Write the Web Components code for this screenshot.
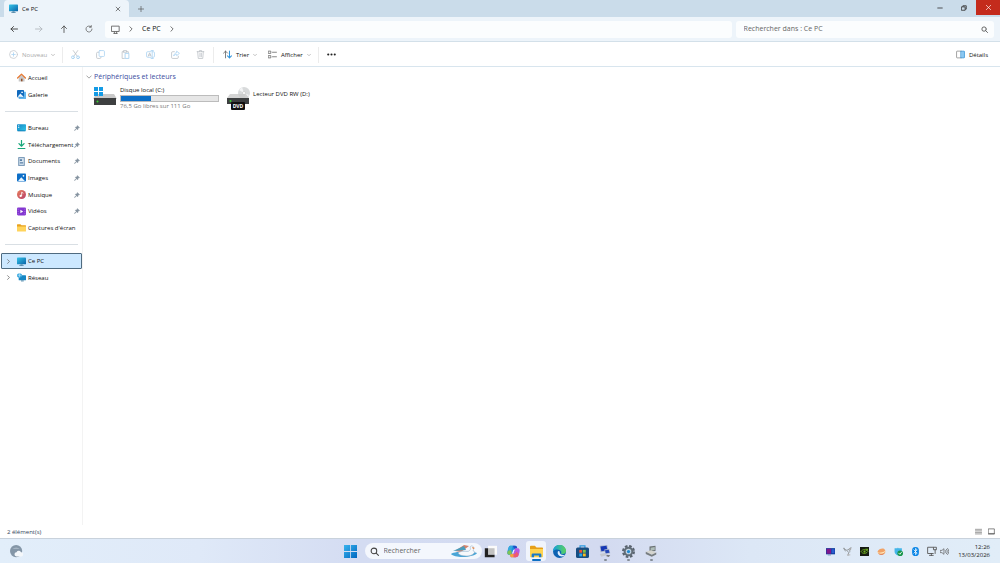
<!DOCTYPE html>
<html lang="fr">
<head>
<meta charset="utf-8">
<title>Ce PC</title>
<style>
html,body{height:100%;margin:0}
body{font:6px/8px "Open Sans","Noto Sans",sans-serif;color:#111;background:#fff;overflow:hidden}
</style>
</head>
<body>
<pc-desktop></pc-desktop>
<script>
const line = (d, c = '#555', w = 1.4) => `<path d="${d}" fill="none" stroke="${c}" stroke-width="${w}" stroke-linecap="round" stroke-linejoin="round"/>`;
const G = '#bcc1c6', B = '#a9d3f2';
const ICONS = {
  pc: `<defs><linearGradient id="a" x2="1" y2="1"><stop stop-color="#35c4e8"/><stop offset="1" stop-color="#0a63a8"/></linearGradient></defs><rect y="1" width="16" height="12" rx="1.2" fill="url(#a)"/><path d="M6 13h4v1.5h2V16H4v-1.5h2z" fill="#5c8fae"/>`,
  desktop: `<defs><linearGradient id="a" x2="1" y2="1"><stop stop-color="#1186c8"/><stop offset="1" stop-color="#35c6e4"/></linearGradient></defs><rect y="2" width="16" height="12" rx="1.5" fill="url(#a)"/><path d="M2 5h2M2 8h2" stroke="#fff" stroke-width="1.5"/><path d="M1 14h14" stroke="#0874b5" stroke-width="1.5"/>`,
  close: line('M3 3l10 10M13 3L3 13', '#444', 1.8),
  closew: line('M3 3l10 10M13 3L3 13', '#fff', 1.5),
  plus: line('M8 1v14M1 8h14', '#555', 1.8),
  min: line('M2 8h12', '#333', 2.2),
  restore: line('M5 4V2h9v9h-2M2 5h9v9H2z', '#333', 2.2),
  back: line('M15 8H2M7 3L2 8l5 5', '#444', 1.9),
  fwd: line('M1 8h13M9 3l5 5-5 5', '#b3b9be', 1.8),
  up: line('M8 15V2M3 7l5-5 5 5', '#555', 1.8),
  reload: line('M14 8a6 6 0 1 1-2-4.500M12.500 1v3.500H9', '#666', 1.6),
  monitor: line('M1.500 2h13v9.500h-13zM5 15h6M6 12v3M10 12v3', '#666', 1.6),
  right: line('M5 2l6 6-6 6', '#666', 2.4),
  down: line('M2 5l6 6 6-6', '#888', 2),
  search: line('M11 11l4 4M12 7A5 5 0 1 1 2 7a5 5 0 0 1 10 0', '#444', 1.8),
  add: line('M15 8A7 7 0 1 1 1 8a7 7 0 0 1 14 0', G, 1.2) + line('M8 5v6M5 8h6', B, 1.4),
  cut: line('M4 1l7 10M12 1L5 11', G) + line('M6 13a2.500 2.500 0 1 1-5 0 2.500 2.500 0 0 1 5 0M15 13a2.500 2.500 0 1 1-5 0 2.500 2.500 0 0 1 5 0', B, 1.7),
  copy: line('M5 4H3a2 2 0 0 0-2 2v7a2 2 0 0 0 2 2h4a2 2 0 0 0 2-2', G) + line('M7 1h6a2 2 0 0 1 2 2v7a1.500 1.500 0 0 1-1.500 1.500H7A1.500 1.500 0 0 1 5.500 10V2.500A1.500 1.500 0 0 1 7 1z', B),
  paste: line('M5 3H2v12h4M10 3h3v2M5 1h5v3H5z', G) + line('M8 6h6v9H8z', B, 1.6),
  rename: line('M9 3H3a2 2 0 0 0-2 2v6a2 2 0 0 0 2 2h6', B) + line('M4 11l2.500-6L9 11M5 9h3', G) + line('M11 1v14M9 1h4M9 15h4M12 3h1a2 2 0 0 1 2 2v6a2 2 0 0 1-2 2h-1', B),
  share: line('M6 3H3a2 2 0 0 0-2 2v8a2 2 0 0 0 2 2h8a2 2 0 0 0 2-2v-2', G) + line('M5 10c1-4 3-5 5-5V2l5 4-5 4V8c-2 0-4 0-5 2z', B),
  trash: line('M2 3h12M6 3V1h4v2M3 3l1 12h8l1-12M7 6v6M9.500 6v6', G),
  sort: line('M4.500 14V2M1 5.500L4.500 2 8 5.500', '#666', 1.5) + line('M11.500 2v12M8 10.500l3.500 3.500 3.500-3.500', '#2f94dc', 1.8),
  view: line('M1 2h4v4H1zM1 10h4v4H1zM8 4h7M8 12h7', '#666', 1.4),
  dots: `<g fill="#222"><circle cx="2.200" cy="8" r="1.900"/><circle cx="8" cy="8" r="1.900"/><circle cx="13.800" cy="8" r="1.900"/></g>`,
  details: `<rect x="9" y="2" width="6.500" height="12" fill="#8cc8f2"/>` + line('M9 2H2a1 1 0 0 0-1 1v10a1 1 0 0 0 1 1h7', '#777', 1.2) + line('M9 2h5a1 1 0 0 1 1 1v10a1 1 0 0 1-1 1H9z', '#2f8fd4', 1.2),
  home: `<path d="M3 7v8h4v-5h3v5h3.500V7L8 2.500z" fill="#c8c8c8"/><path d="M7 10h3v5H7z" fill="#8a5130"/>` + line('M1 9l7-7 7 7', '#e8772e', 2.2),
  gallery: `<rect x="3" y="3" width="13" height="13" rx="1" fill="#63b7ee"/><rect width="12.500" height="13" rx="1.500" fill="#1069bd"/><path d="M1 12l5-6 6 6.500z" fill="#e4f4ff"/><circle cx="9" cy="4" r="1.500" fill="#fff"/>`,
  download: line('M8 1v9.500M3.500 6.500L8 11l4.500-4.500', '#19a77b', 2.2) + line('M2 15h12', '#19a77b', 2),
  doc: `<rect x="2" y="0" width="12" height="16" rx="1.500" fill="#7f9dba"/><rect x="4" y="2" width="8" height="12" fill="#d9e6f2"/><path d="M5 4h4v3H5zM5 9h6v1H5zM5 11.500h6v1H5z" fill="#587fa5"/>`,
  image: `<rect x="0" y="1" width="16" height="14" rx="1.500" fill="#0d6ec7"/><path d="M2 14l5.500-6.500L14 14z" fill="#e5f4ff"/><circle cx="11.500" cy="5" r="1.500" fill="#fff"/>`,
  music: `<defs><linearGradient id="a" x2="1" y2="1"><stop stop-color="#e9805b"/><stop offset="1" stop-color="#b8406c"/></linearGradient></defs><circle cx="8" cy="8" r="8" fill="url(#a)"/><circle cx="6.500" cy="10.500" r="2" fill="#fff"/>` + line('M8.200 10V4l2.500 1.500', '#fff', 1.4),
  video: `<rect y="1" width="16" height="14" rx="2" fill="#8337d0"/><path d="M6 5l5 3-5 3z" fill="#fff"/><path d="M2 3v10M14 3v10" stroke="#c79af4" stroke-dasharray="2 2"/>`,
  folder: `<path d="M0 3a1 1 0 0 1 1-1h5l2 2h7a1 1 0 0 1 1 1v3H0z" fill="#e9a31e"/><path d="M0 6h16v8a1 1 0 0 1-1 1H1a1 1 0 0 1-1-1z" fill="#ffd45c"/>`,
  network: `<rect x="3" y="4" width="13" height="9" rx="1" fill="#1687c4"/><path d="M7 13h5v2H7z" fill="#5c8fae"/><rect x="0" y="1" width="9" height="7" rx="3" fill="#37a7de"/><path d="M1 4h7M4.500 1v7" stroke="#c8ecff"/>`,
  pin: `<path d="M9 1l6 6-2 .5-2.500 2.500-.5 3-3-3L2 15l-1-1 5-5-3-3 3-.5L8.500 3z" fill="#8593a0" stroke="#8593a0"/>`,
  list: line('M1 3h14M1 6.500h14M1 10h14M1 13.500h14', '#555', 1.3),
  tiles: line('M1.500 2h13v12h-13zM2 12.500h12', '#555', 1.6),
  weather: `<circle cx="7.500" cy="7.500" r="7.500" fill="#8496a7"/><path d="M3 5a6 6 0 0 1 9 0" fill="#a6b5c3"/><path d="M8 14a2.500 2.500 0 0 1 0-5 3 3 0 0 1 5.500 0A2.500 2.500 0 0 1 14 14z" fill="#f4f7fa"/>`,
  start: `<defs><linearGradient id="a" x2="1" y2="1"><stop stop-color="#39b4ee"/><stop offset="1" stop-color="#0067c0"/></linearGradient></defs><path d="M0 0h7.500v7.500H0zM8.500 0H16v7.500H8.500zM0 8.500h7.500V16H0zM8.500 8.500H16V16H8.500z" fill="url(#a)"/>`,
  tasks: `<rect x="5" y="1" width="11" height="11" fill="#fafafa"/><path d="M1 4h4v8h8v3H1z" fill="#222"/><path d="M5 4h8v8H5z" fill="#8a8a8a" opacity=".5"/>`,
  copilot: `<path d="M5 1h5c1.500 0 2 1 2.500 2.500L11 5c-2 0-3 1-3.500 3L6 12H3C0 12 0 9 1 6l1-3c.5-1.500 1.500-2 3-2z" fill="#1e8fe0"/><path d="M7 1h3c1.500 0 2 1 2.500 2.500L11 5 8.500 4z" fill="#1c50c8"/><path d="M1 6l1-3c.5-1.500 1.500-2 3-2h2L5 8z" fill="#35a8dd"/><path d="M.5 9c.5-2 2-3 5-2L6 12H3c-2 0-3-1-2.500-3z" fill="#7fc456"/><path d="M11 15H6c-1.500 0-2-1-2.500-2.500L5 11c2 0 3-1 3.500-3L10 4h3c3 0 3 3 2 6l-1 3c-.5 1.500-1.500 2-3 2z" fill="#b55ae0"/><path d="M6 15c-1.500 0-2-1-2.500-2.500L5 11h3l3 4z" fill="#f5a33c"/><path d="M8 11c2 0 3-1 3.500-3l3 3-.5 2c-.5 1.500-1.500 2-3 2H8z" fill="#ee5a72"/><path d="M8.500 6l-1.500 4.500" stroke="#eef" stroke-width="1.500"/>`,
  explorer: `<path d="M0 2a1 1 0 0 1 1-1h5l2 2h7a1 1 0 0 1 1 1v4H0z" fill="#e6a019"/><path d="M0 5h16v9a1 1 0 0 1-1 1H1a1 1 0 0 1-1-1z" fill="#ffd34f"/><path d="M2 15v-3a1.500 1.500 0 0 1 1.500-1.500h9A1.500 1.500 0 0 1 14 12v3h-3v-2H5v2z" fill="#1779ca"/>`,
  edge: `<defs><linearGradient id="a" x2="1"><stop stop-color="#159fdd"/><stop offset="1" stop-color="#5bd35d"/></linearGradient></defs><circle cx="8" cy="8" r="8" fill="#0d62b2"/><path d="M0 8a8 8 0 0 1 16-.5c0 3-2.500 4-5 3.500-2-.5-.5-1.500-1-3C9 5.500 3 4 0 8z" fill="url(#a)"/><path d="M6 8c-1 3 1 6 5 6 2 0 3-1 4-2-3 1-7 0-7-4 0-1-1.500-1-2 0z" fill="#e1efff"/>`,
  store: `<path d="M5 4V1h6v3" fill="none" stroke="#2b9ae0" stroke-width="1.500"/><rect y="3" width="16" height="13" rx="2" fill="#174d82"/><path d="M4 6h3.500v3.500H4z" fill="#f05133"/><path d="M8.500 6H12v3.500H8.500z" fill="#7fc142"/><path d="M4 10.500h3.500V14H4z" fill="#28a8ea"/><path d="M8.500 10.500H12V14H8.500z" fill="#fcbb1a"/>`,
  remote: `<path d="M1 1l10-1 1.500 8L2 9.500z" fill="#a9b4cc"/><path d="M2 2l8-1 1.200 6-8 1.200z" fill="#1637b4"/><path d="M7 6l6.500-1L15 11l-6.500 1z" fill="#a9b4cc"/><path d="M8 7l5-.8 1 4-5 .8z" fill="#2446b8"/><path d="M1 12l7-1.500 2 3L3 15.500z" fill="#c4c8d0"/><path d="M10 13l5 .5-2 2.500-3-1z" fill="#777"/>`,
  gear: `<circle cx="8" cy="8" r="6.500" fill="none" stroke="#59636e" stroke-width="3" stroke-dasharray="3.100 2"/><circle cx="8" cy="8" r="4.700" fill="#c6d5e3" stroke="#626d78" stroke-width="2.500"/><circle cx="8" cy="8" r="2" fill="#2088cf"/>`,
  tools: `<path d="M6 2l8-1v7L6 9z" fill="#6c7375"/><path d="M7.500 3.500L13 2.500v4l-5.500 1z" fill="#aebdb9"/><path d="M1 9l7-2 7 3-6 3z" fill="#d5d5cf"/><path d="M1 9l8 4v2.500L1 12zM9 13l6-3v2.500l-6 3z" fill="#777d80"/>`,
  tray1: `<rect y="2" width="16" height="11" fill="#123e9e"/><rect x="1" y="3" width="8" height="9" fill="#7e168d"/><path d="M10 4h5v7h-5z" fill="#2a5cd0"/><path d="M3 13h6v2H3z" fill="#7894bf"/>`,
  sat: line('M1 3l6 3 3 4-1 5M14 1l-4 4M8 5c3-2 5 1 4 4M2 2l2 5', '#8b9092', 1.5) + `<path d="M10 2l5-1-1 5z" fill="#aaa"/><path d="M7 13h6v2H7z" fill="#bbb"/>`,
  nvidia: `<rect width="16" height="16" fill="#161b12"/><path d="M2 8c2-4 8-5 12 0-4 5-10 4-12 0z" fill="none" stroke="#72b421" stroke-width="1.500"/><circle cx="8" cy="8" r="2" fill="#72b421"/><path d="M9 3h5v4z" fill="#72b421"/>`,
  planet: `<path d="M1 8c2-5 11-7 13-3 2 3 1 8-5 9-4 1-8-2-8-6z" fill="#f1a266"/><path d="M0 9c4 2 10 1 16-3-2 5-12 8-16 3z" fill="#fff0c8"/><path d="M3 12c3 3 8 2 10-1-3 2-7 2-10 1z" fill="#d78166"/>`,
  shield: `<path d="M1 2h5l1-1 1 1h6v6c0 4-3 6-7 7-3-1-6-3-6-7z" fill="#43b5e8"/><circle cx="11" cy="11" r="5" fill="#159447"/>` + line('M8.500 11l2 2 3-4', '#fff', 1.5),
  bt: `<rect x="2" width="12" height="16" rx="6" fill="#0784e6"/>` + line('M5 5l6 6-3 2.500v-11L11 5l-6 6', '#fff', 1.3),
  net: line('M10 2H1v10h9M4 15h6M7 12v3', '#555', 1.4) + line('M11 2h4v4h-4zM13 6v6', '#555', 1.4),
  vol: line('M1 6h2.500L7 3v10l-3.500-3H1zM9.500 6c1 1 1 3 0 4M11.500 4c2 2 2 6 0 8M13.500 2.500c3 3 3 8 0 11', '#555', 1.2)
};

class Base extends HTMLElement {
  connectedCallback() {
    if (this.shadowRoot) return;
    const t = document.createElement('template');
    t.innerHTML = `<style>*{box-sizing:border-box}button{font:inherit;color:inherit;background:none;border:0;padding:0;margin:0;display:flex;align-items:center}${this.css()}</style>${this.html()}`;
    this.attachShadow({ mode: 'open' }).append(t.content.cloneNode(true));
  }
  at(n, d = '') { return this.getAttribute(n) ?? d; }
}
const def = (name, css, html) => customElements.define(name, class extends Base {
  css() { return typeof css === 'function' ? css(this) : css; }
  html() { return typeof html === 'function' ? html(this) : html; }
});
const ic = (n, s = 8) => `<pc-icon name="${n}" size="${s}"></pc-icon>`;
const btn = (n, label, s = 8) => `<button aria-label="${label}">${ic(n, s)}</button>`;

def('pc-icon', e => `:host{display:block;flex:none;width:${e.at('size', 8)}px;height:${e.at('size', 8)}px}svg{display:block;width:100%;height:100%}`,
  e => `<svg viewBox="0 0 16 16" aria-hidden="true">${ICONS[e.at('name')]}</svg>`);

def('pc-titlebar', `:host{display:flex;height:17px;background:#cadcea;align-items:flex-start}
.tab{display:flex;align-items:center;width:125px;height:17px;margin-left:4px;padding:0 8px 0 5px;background:#edf4fa;border-radius:4px 4px 0 0}
.tab span{flex:1;padding-left:4px}.new{width:24px;height:17px;justify-content:center}
.win{margin-left:auto;display:flex}.win button{width:24px;height:15px;justify-content:center}.win .x{background:#c42b1c}`,
`<div class="tab">${ic('pc', 9)}<span>Ce PC</span>${btn('close', 'Fermer l’onglet', 6)}</div><button class="new" aria-label="Nouvel onglet">${ic('plus', 6)}</button>
<div class="win">${btn('min', 'Réduire', 6)}${btn('restore', 'Restaurer', 6)}<button class="x" aria-label="Fermer">${ic('closew', 7)}</button></div>`);

def('pc-navbar', `:host{display:flex;height:25px;align-items:center;padding-right:6px;background:#edf4fa;border-bottom:1px solid #d3e0e9;font-size:7px;line-height:10px}
.nav{display:flex;padding-left:1px;margin-right:4px}.nav button{width:25px;height:16px;justify-content:center}
.addr{flex:1;display:flex;align-items:center;height:17px;padding-left:6px;background:#fbfdfe;border-radius:3px;gap:8px}
.search{display:flex;align-items:center;width:26%;height:17px;margin-left:4px;padding:0 6px 0 8px;background:#fbfdfe;border-radius:3px}
input{flex:1;min-width:0;border:0;outline:0;padding:0;background:none;font:inherit;color:#555}input::placeholder{color:#666;opacity:1}`,
`<div class="nav">${btn('back', 'Précédent')}${btn('fwd', 'Suivant')}${btn('up', 'Dossier parent')}${btn('reload', 'Actualiser')}</div>
<div class="addr">${ic('monitor', 9)}${ic('right', 6)}<span>Ce PC</span>${ic('right', 6)}</div>
<label class="search"><input aria-label="Rechercher" placeholder="Rechercher dans : Ce PC">${ic('search', 7)}</label>`);

def('pc-commands', `:host{display:flex;height:25px;align-items:center;padding:1px 12px 0 9px;background:#fff;border-bottom:1px solid #d8e5ee}
button{gap:4px}.new{color:#aaa;width:45px}.s{width:1px;height:16px;background:#ececec}
.tools{display:flex}.tools button{width:25px;justify-content:center}
.new+.s{margin-left:8px}.sort{margin-left:9px;width:32px}.view{margin-left:13px;width:42px}.view+.s{margin:0 8px 0 8px}.det{margin-left:auto}`,
`<button class="new">${ic('add', 9)}<span>Nouveau</span>${ic('down', 4)}</button><i class="s"></i>
<div class="tools">${btn('cut', 'Couper', 9)}${btn('copy', 'Copier', 9)}${btn('paste', 'Coller', 9)}${btn('rename', 'Renommer', 9)}${btn('share', 'Partager', 9)}${btn('trash', 'Supprimer', 9)}</div><i class="s"></i>
<button class="sort">${ic('sort', 9)}<span>Trier</span>${ic('down', 4)}</button>
<button class="view">${ic('view', 9)}<span>Afficher</span>${ic('down', 4)}</button><i class="s"></i>
${btn('dots', 'Plus', 9)}<button class="det">${ic('details', 9)}<span>Détails</span></button>`);

def('pc-place', e => `:host{display:block;min-width:0}a{display:flex;align-items:center;height:100%;padding:0 1px 0 4px;border:1px solid transparent;border-radius:1px;color:inherit;text-decoration:none;white-space:nowrap}
.c{width:11px;flex:none}.t{flex:1;min-width:0;padding-left:2px}:host([selected]) a{background:#cce8ff;border-color:#4f6b80}`,
  e => `<a href="#"><span class="c">${e.hasAttribute('tree') ? ic('right', 5) : ''}</span>${ic(e.at('icon'), 9)}<span class="t"><slot></slot></span>${e.hasAttribute('pinned') ? ic('pin', 6) : ''}</a>`);

def('pc-sidebar', `:host{display:grid;grid-auto-rows:17px 17px 16px;align-content:start;width:83px;flex:none;box-sizing:border-box;padding:2px 1px 0 1px;border-right:1px solid #f3f3f3}
hr{width:73px;height:1px;border:0;background:#d9dfe4;margin:auto 4px}`,
`<pc-place icon="home">Accueil</pc-place><pc-place icon="gallery">Galerie</pc-place><hr>
<pc-place icon="desktop" pinned>Bureau</pc-place><pc-place icon="download" pinned>Téléchargement</pc-place><pc-place icon="doc" pinned>Documents</pc-place><pc-place icon="image" pinned>Images</pc-place><pc-place icon="music" pinned>Musique</pc-place><pc-place icon="video" pinned>Vidéos</pc-place><pc-place icon="folder">Captures d'écran</pc-place><hr>
<pc-place icon="pc" tree selected>Ce PC</pc-place><pc-place icon="network" tree>Réseau</pc-place>`);

const DISK = `<path d="M3 14h18l3 5H0z" fill="#c9c9c9"/><path d="M1 18h22v7H1z" fill="#3d3f40"/><circle cx="4.500" cy="21.500" r="1" fill="#38d430"/>`;
def('pc-drive', `:host{display:flex;width:133px;gap:3px}svg{width:24px;height:26px;flex:none;display:block}
.i{flex:1;line-height:8px}.bar{height:7px;margin:1px 7px 0 0;border:1px solid #bcbcbc;background:#e6e6e6}.bar i{display:block;height:100%;width:31%;background:#0b6fc8}.free{color:#777}
:host([type=dvd]) .i{padding-top:4px}`,
  e => e.at('type') === 'dvd'
    ? `<svg viewBox="0 0 24 26"><circle cx="18" cy="7" r="6" fill="#d8dadb"/><path d="M18 7l-5-3 3-3zM18 7l5 2-3 3z" fill="#f3f4f5"/><circle cx="18" cy="7" r="1.500" fill="#fff" stroke="#bbb" stroke-width=".5"/><path d="M4 8h16l3 4H1z" fill="#c9c9c9" opacity=".8"/><path d="M1 12h22v6H1z" fill="#3d3f40"/><circle cx="4.500" cy="15" r="1" fill="#38d430"/><rect x="5" y="16" width="14" height="8" rx="1" fill="#111"/><text x="12" y="22" font-size="5" font-weight="700" fill="#fff" text-anchor="middle">DVD</text></svg><div class="i"><slot></slot></div>`
    : `<svg viewBox="0 0 24 26"><g transform="translate(0 -6)">${DISK}</g><path d="M1 1h4v4H1zM6 1h4v4H6zM1 6h4v4H1zM6 6h4v4H6z" fill="#149be5"/></svg><div class="i"><div><slot></slot></div><div class="bar"><i></i></div><div class="free">${e.at('free')}</div></div>`);

def('pc-content', `:host{display:block;flex:1;padding:4px 3px}h2{display:flex;align-items:center;gap:2px;margin:0 0 4px;font-weight:400;font-size:7px;line-height:11px;color:#3a4ca0}.g{display:flex;padding-left:7px;flex-wrap:wrap}`,
`<h2>${ic('down', 6)}Périphériques et lecteurs</h2><div class="g"><pc-drive free="76,5 Go libres sur 111 Go">Disque local (C:)</pc-drive><pc-drive type="dvd">Lecteur DVD RW (D:)</pc-drive></div>`);

def('pc-status', `:host{display:flex;align-items:center;height:13px;padding:0 5px 0 7px;color:#33475b}.v{margin-left:auto;display:flex;gap:6px}`,
`<span>2 élément(s)</span><div class="v">${btn('list', 'Détails', 7)}${btn('tiles', 'Grandes icônes', 7)}</div>`);

def('pc-app', `:host{display:flex;position:relative;width:23px;height:24px;justify-content:center;align-items:center}
button{width:20px;height:20px;border-radius:3px;justify-content:center}
:host([active]) button{background:#f0f4fc}:host([active])::after,:host([open])::after{content:"";position:absolute;bottom:2px;width:3px;height:2px;border-radius:1px;background:#858d96}:host([active])::after{width:9px;background:#0c6fc4}`,
  e => btn(e.at('icon'), e.at('label'), +e.at('size', 13)));

def('pc-taskbar', `:host{display:grid;grid-template-columns:1fr auto 1fr;align-items:center;height:25px;box-sizing:border-box;padding:0 10px;border-top:1px solid #c9d2dc;background:linear-gradient(90deg,#e2eefa,#dfe9f8 20%,#d4dcf2 36%,#d3daf0 60%,#dce7f6 75%,#e1edf8)}
.apps{display:flex;align-items:center}.search{display:flex;align-items:center;width:117px;height:16px;margin:0 -3px 0 3px;padding:0 4px 0 5px;border-radius:8px;background:#f4f7fd;font-size:7px;gap:5px}
.search input{flex:1;min-width:0;border:0;outline:0;padding:0;background:none;font:inherit}input::placeholder{color:#666;opacity:1}.search svg{width:28px;height:14px}
.tray{justify-self:end;display:flex;align-items:center;gap:8px}.tray button:nth-last-of-type(2){margin-left:-1px}.tray button:last-of-type{margin-left:-5px}time{text-align:right;line-height:8px;width:34px;color:#222;margin-left:-1px;white-space:nowrap}
.start{width:24px;justify-content:flex-end;padding-right:5px}`,
`<div><button aria-label="Météo">${ic('weather', 13)}</button></div>
<div class="apps"><button class="start" aria-label="Démarrer">${ic('start', 13)}</button>
<label class="search">${ic('search', 9)}<input aria-label="Rechercher" placeholder="Rechercher"><svg viewBox="0 0 28 14" aria-hidden="true"><path d="M1 10c5-3 20-3 26-1-1 4-22 6-26 1z" fill="#4aa5d6"/><path d="M5 7l9-6 5 1-8 6z" fill="#d5826b"/><path d="M3 7l11-5 2 4z" fill="#4a9dbd"/><path d="M8 9c4-3 9-1 11-2 3-2 0-4 2-5 3-1 3 3 2 5 4 0 0 5-6 5-5 0-8-1-9-3z" fill="#f6f8fb" stroke="#8ca8c2" stroke-width=".5"/><path d="M22 3l3 1-2 1z" fill="#e57a32"/></svg></label>
<pc-app icon="tasks" label="Applications"></pc-app><pc-app icon="copilot" label="Copilot"></pc-app><pc-app icon="explorer" label="Explorateur" active></pc-app><pc-app icon="edge" label="Edge"></pc-app><pc-app icon="store" label="Store"></pc-app><pc-app icon="remote" label="Ordinateur" open size="12"></pc-app><pc-app icon="gear" label="Paramètres" open></pc-app><pc-app icon="tools" label="Matériel" open size="12"></pc-app></div>
<div class="tray">${['tray1', 'sat', 'nvidia', 'planet', 'shield', 'bt'].map(n => btn(n, n, 9)).join('')}${btn('net', 'Réseau', 10)}${btn('vol', 'Volume', 9)}<time>12:26<br>13/03/2026</time></div>`);

def('pc-desktop', `:host{display:flex;flex-direction:column;height:100vh;min-height:320px}main{display:flex;flex:1;min-height:0}`,
`<pc-titlebar></pc-titlebar><pc-navbar></pc-navbar><pc-commands></pc-commands><main><pc-sidebar></pc-sidebar><pc-content></pc-content></main><pc-status></pc-status><pc-taskbar></pc-taskbar>`);
</script>
</body>
</html>
